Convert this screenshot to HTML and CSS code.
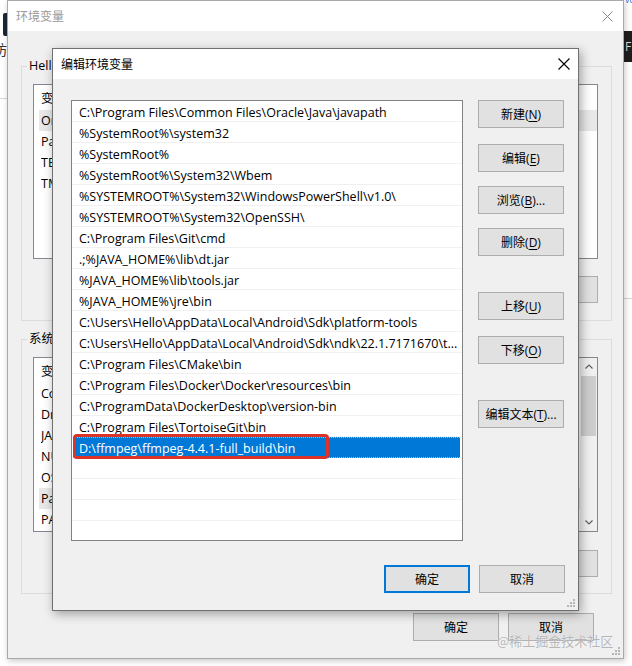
FILE: index.html
```html
<!DOCTYPE html>
<html lang="zh-CN">
<head>
<meta charset="utf-8">
<title>编辑环境变量</title>
<link rel="stylesheet" href="styles.css">
</head>
<body>
<div class="desk">
  <div class="bg-icon"></div>
  <div class="bg-char">坊</div>
  <div class="bg-line bg-line-l"></div>
  <div class="bg-vc">vc</div>
  <div class="bg-dark">F</div>
  <div class="bg-line bg-line-r"></div>

  <section class="win win-outer">
    <header class="titlebar outer-title">
      <span class="title">环境变量</span>
      <svg class="close" width="11" height="11" viewBox="0 0 11 11"><path d="M0.5 0.5L10.5 10.5M10.5 0.5L0.5 10.5" stroke="#8a8a8a" stroke-width="1" fill="none"/></svg>
    </header>
    <div class="outer-body">
      <fieldset class="group group-user">
        <legend>Hello 的用户变量(<u>U</u>)</legend>
        <div class="listview">
          <div class="lv-main">
            <div class="lv-head"><span class="c1">变量</span><span class="c2">值</span></div>
            <div class="lv-row sel"><span class="c1">OneDrive</span><span class="c2">C:\Users\Hello\OneDrive</span></div>
            <div class="lv-row"><span class="c1">Path</span><span class="c2">C:\Users\Hello\AppData\Local\Microsoft\WindowsApps;</span></div>
            <div class="lv-row"><span class="c1">TEMP</span><span class="c2">C:\Users\Hello\AppData\Local\Temp</span></div>
            <div class="lv-row"><span class="c1">TMP</span><span class="c2">C:\Users\Hello\AppData\Local\Temp</span></div>
          </div>
        </div>
        <div class="btn-row">
          <div class="btn">新建(<u>N</u>)...</div>
          <div class="btn">编辑(<u>E</u>)...</div>
          <div class="btn">删除(<u>D</u>)</div>
        </div>
      </fieldset>

      <fieldset class="group group-sys">
        <legend>系统变量(<u>S</u>)</legend>
        <div class="listview">
          <div class="lv-main">
            <div class="lv-head"><span class="c1">变量</span><span class="c2">值</span></div>
            <div class="lv-row"><span class="c1">ComSpec</span><span class="c2">C:\Windows\system32\cmd.exe</span></div>
            <div class="lv-row"><span class="c1">DriverData</span><span class="c2">C:\Windows\System32\Drivers\DriverData</span></div>
            <div class="lv-row"><span class="c1">JAVA_HOME</span><span class="c2">C:\Program Files\Java\jdk1.8.0</span></div>
            <div class="lv-row"><span class="c1">NUMBER_OF_PROCESSORS</span><span class="c2">8</span></div>
            <div class="lv-row"><span class="c1">OS</span><span class="c2">Windows_NT</span></div>
            <div class="lv-row sel"><span class="c1">Path</span><span class="c2">C:\Program Files\Common Files\Oracle\Java\javapath</span></div>
            <div class="lv-row"><span class="c1">PATHEXT</span><span class="c2">.COM;.EXE;.BAT;.CMD;.VBS;.VBE;.JS</span></div>
          </div>
          <div class="scrollbar">
            <div class="sb-arrow"><svg width="8" height="5" viewBox="0 0 8 5"><path d="M0.5 4.5L4 1L7.5 4.5" stroke="#606060" stroke-width="1.2" fill="none"/></svg></div>
            <div class="sb-track"><div class="sb-thumb"></div></div>
            <div class="sb-arrow"><svg width="8" height="5" viewBox="0 0 8 5"><path d="M0.5 0.5L4 4L7.5 0.5" stroke="#606060" stroke-width="1.2" fill="none"/></svg></div>
          </div>
        </div>
        <div class="btn-row">
          <div class="btn">新建(<u>W</u>)...</div>
          <div class="btn">编辑(<u>I</u>)...</div>
          <div class="btn">删除(<u>L</u>)</div>
        </div>
      </fieldset>

      <div class="dlg-buttons outer-buttons">
        <div class="btn btn-tall">确定</div>
        <div class="btn btn-tall">取消</div>
      </div>
    </div>
    <svg class="grip" width="8" height="8" viewBox="0 0 8 8"><g fill="#b5b5b5"><rect x="6" y="0" width="2" height="2"/><rect x="3" y="3" width="2" height="2"/><rect x="6" y="3" width="2" height="2"/><rect x="0" y="6" width="2" height="2"/><rect x="3" y="6" width="2" height="2"/><rect x="6" y="6" width="2" height="2"/></g></svg>
  </section>

  <section class="win win-inner">
    <header class="titlebar inner-title">
      <span class="title">编辑环境变量</span>
      <svg class="close" width="12" height="12" viewBox="0 0 12 12"><path d="M0.5 0.5L11.5 11.5M11.5 0.5L0.5 11.5" stroke="#000" stroke-width="1.1" fill="none"/></svg>
    </header>
    <div class="inner-body">
      <div class="edit-main">
        <div class="path-list">
          <div class="p-row">C:\Program Files\Common Files\Oracle\Java\javapath</div>
          <div class="p-row">%SystemRoot%\system32</div>
          <div class="p-row">%SystemRoot%</div>
          <div class="p-row">%SystemRoot%\System32\Wbem</div>
          <div class="p-row">%SYSTEMROOT%\System32\WindowsPowerShell\v1.0\</div>
          <div class="p-row">%SYSTEMROOT%\System32\OpenSSH\</div>
          <div class="p-row">C:\Program Files\Git\cmd</div>
          <div class="p-row">.;%JAVA_HOME%\lib\dt.jar</div>
          <div class="p-row">%JAVA_HOME%\lib\tools.jar</div>
          <div class="p-row">%JAVA_HOME%\jre\bin</div>
          <div class="p-row">C:\Users\Hello\AppData\Local\Android\Sdk\platform-tools</div>
          <div class="p-row">C:\Users\Hello\AppData\Local\Android\Sdk\ndk\22.1.7171670\t...</div>
          <div class="p-row">C:\Program Files\CMake\bin</div>
          <div class="p-row">C:\Program Files\Docker\Docker\resources\bin</div>
          <div class="p-row">C:\ProgramData\DockerDesktop\version-bin</div>
          <div class="p-row">C:\Program Files\TortoiseGit\bin</div>
          <div class="p-row p-sel">D:\ffmpeg\ffmpeg-4.4.1-full_build\bin</div>
          <div class="p-row"></div>
          <div class="p-row"></div>
          <div class="p-row"></div>
          <div class="p-row"></div>
        </div>
        <div class="side-buttons">
          <div class="btn btn-tall">新建(<u>N</u>)</div>
          <div class="btn btn-tall sb-2">编辑(<u>E</u>)</div>
          <div class="btn btn-tall sb-3">浏览(<u>B</u>)...</div>
          <div class="btn btn-tall sb-3">删除(<u>D</u>)</div>
          <div class="btn btn-tall sb-far">上移(<u>U</u>)</div>
          <div class="btn btn-tall sb-2">下移(<u>O</u>)</div>
          <div class="btn btn-tall sb-far">编辑文本(<u>T</u>)...</div>
        </div>
      </div>
      <div class="dlg-buttons inner-buttons">
        <div class="btn btn-tall btn-default">确定</div>
        <div class="btn btn-tall">取消</div>
      </div>
    </div>
    <svg class="grip" width="8" height="8" viewBox="0 0 8 8"><g fill="#b5b5b5"><rect x="6" y="0" width="2" height="2"/><rect x="3" y="3" width="2" height="2"/><rect x="6" y="3" width="2" height="2"/><rect x="0" y="6" width="2" height="2"/><rect x="3" y="6" width="2" height="2"/><rect x="6" y="6" width="2" height="2"/></g></svg>
  </section>

  <div class="mark-box"></div>
  <div class="watermark">@稀土掘金技术社区</div>
</div>
</body>
</html>
```

FILE: styles.css
```css
* { box-sizing: border-box; }
html, body { margin: 0; padding: 0; }
body {
  width: 632px;
  height: 666px;
  overflow: hidden;
  background: #ffffff;
  font-family: "Open Sans", "Noto Sans CJK SC", sans-serif;
  font-size: 12.5px;
  color: #000;
}
u { text-decoration: underline; text-underline-offset: 2px; }

.desk { position: relative; width: 632px; height: 666px; overflow: hidden; }

/* desktop bits behind the dialogs */
.bg-icon { position: absolute; left: 3px; top: 13px; width: 6px; height: 23px; background: #1c2736; border-radius: 2px; }
.bg-char { position: absolute; left: -7px; top: 41px; font-size: 14px; color: #333; line-height: 18px; }
.bg-line { position: absolute; height: 1px; background: #d6d6d6; }
.bg-line-l { left: 0; top: 98px; width: 7px; }
.bg-line-r { left: 624px; top: 298px; width: 8px; }
.bg-vc { position: absolute; left: 625px; top: -5px; font-size: 9px; color: #3b6fd1; line-height: 10px; }
.bg-dark { position: absolute; left: 624px; top: 31px; width: 8px; height: 31px; background: #1e1e1e; color: #ddd; font-size: 12px; line-height: 31px; padding-left: 1px; }

/* windows */
.win { position: absolute; display: flex; flex-direction: column; background: #f0f0f0; }
.win-outer {
  left: 7px; top: 0; width: 617px; height: 659px;
  border: 1px solid #a9a9a9;
  box-shadow: 1px 2px 6px rgba(0, 0, 0, 0.22);
}
.win-inner {
  left: 52px; top: 48px; width: 527px; height: 563px;
  border: 1px solid #707070;
  box-shadow: 2px 3px 10px rgba(0, 0, 0, 0.35);
}

.titlebar {
  height: 30px;
  flex: none;
  background: #fff;
  display: flex;
  align-items: center;
  justify-content: space-between;
  padding: 0 10px 0 8px;
  font-size: 12px;
}
.outer-title .title { color: #9a9a9a; }
.inner-title { padding-right: 8px; }
.inner-title .title { color: #000; }
.close { display: block; }

.grip { position: absolute; right: 3px; bottom: 3px; }

/* outer dialog body */
.outer-body { flex: 1; display: flex; flex-direction: column; }

.group {
  margin: 10px 11px 0 13px;
  padding: 10px 13px 16px 11px;
  border: 1px solid #dcdcdc;
  min-inline-size: 0;
}
.group-user { margin-top: 27px; padding-bottom: 17px; }
.group legend {
  margin-left: -6px;
  padding: 0 2px;
  line-height: 16px;
  font-size: 12.5px;
}
.group-sys .btn-row { margin-top: 18px; }

.listview {
  height: 175px;
  background: #fff;
  border: 1px solid #828790;
  display: flex;
  overflow: hidden;
}
.lv-main { flex: 1; min-width: 0; }
.lv-head { height: 25px; display: flex; align-items: center; padding-left: 7px; }
.lv-row { height: 21px; display: flex; align-items: center; padding-left: 2px; margin-left: 5px; white-space: nowrap; }
.lv-row.sel { background: #e8e8e8; }
.c1 { width: 160px; flex: none; overflow: hidden; }
.c2 { width: 360px; flex: none; overflow: hidden; text-overflow: ellipsis; white-space: nowrap; }

.scrollbar { width: 17px; flex: none; display: flex; flex-direction: column; background: #f0f0f0; }
.sb-arrow { height: 17px; flex: none; display: flex; align-items: center; justify-content: center; }
.sb-track { flex: 1; }
.sb-thumb { width: 15px; height: 60px; margin: 1px auto 0; background: #cdcdcd; }

.btn-row { display: flex; justify-content: flex-end; gap: 2px; margin-top: 17px; }

.btn {
  width: 86px;
  height: 27px;
  flex: none;
  display: flex;
  align-items: center;
  justify-content: center;
  background: #e1e1e1;
  border: 1px solid #adadad;
  font-size: 12px;
  white-space: nowrap;
}
.btn-tall { height: 28px; }
.btn-default { border: 2px solid #0078d7; }

.dlg-buttons { display: flex; justify-content: flex-end; gap: 9px; }
.outer-buttons { margin-top: 19px; padding-right: 29px; }

/* inner dialog body */
.inner-body { flex: 1; display: flex; flex-direction: column; padding: 21px 13px 0 18px; }
.edit-main { display: flex; gap: 15px; }
.path-list {
  width: 392px;
  height: 441px;
  flex: none;
  background: #fff;
  border: 1px solid #828282;
  overflow: hidden;
}
.p-row {
  height: 21px;
  line-height: 20px;
  padding-top: 2px;
  padding-left: 7px;
  border-bottom: 1px solid #f0f0f0;
  white-space: nowrap;
  overflow: hidden;
}
.p-sel {
  margin: 0 2px 0 1px;
  padding-left: 6px;
  padding-top: 2px;
  background: #0078d7;
  color: #fff;
  border-top: 1px dotted #9cc8ee;
  border-bottom: 1px dotted #9cc8ee;
  line-height: 18px;
}
.side-buttons { display: flex; flex-direction: column; width: 86px; }
.sb-2 { margin-top: 16px; }
.sb-3 { margin-top: 14px; }
.sb-far { margin-top: 36px; }
.inner-buttons { margin-top: 24px; }

/* annotation overlays */
.mark-box {
  position: absolute;
  left: 73px; top: 434px;
  width: 256px; height: 25px;
  border: 3px solid #dc3329;
  border-radius: 4px;
}
.watermark {
  position: absolute;
  left: 497px; top: 632px;
  font-family: "Noto Sans CJK SC", sans-serif;
  font-size: 13px;
  line-height: 18px;
  color: rgba(150, 150, 150, 0.7);
  text-shadow: 0 0 1px #fff;
}
```
